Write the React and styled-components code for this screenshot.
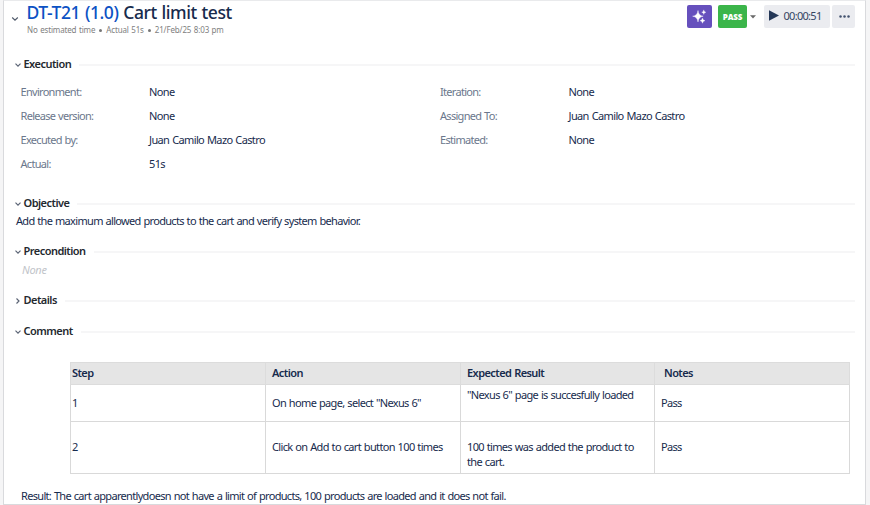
import React from "react";
import styled, { createGlobalStyle } from "styled-components";

const Global = createGlobalStyle`
  *, *::before, *::after { box-sizing: border-box; }
  body {
    margin: 0;
    background: #f5f5f6;
    font-family: "Noto Sans", "Open Sans", sans-serif;
    font-size: 11px;
    line-height: 16px;
    word-spacing: 0.6px;
    color: #172b4d;
    overflow: hidden;
  }
`;

const Panel = styled.main`
  width: 863px;
  height: 505px;
  margin-left: 3px;
  background: #fff;
  border: 1px solid #d9dadd;
  border-top-color: #e9eaec;
  overflow: hidden;
`;

const Header = styled.header`
  display: flex;
  height: 55px;
  padding: 0 10px 0 7px;
`;

const Toggle = styled.span`
  display: flex;
  flex: none;
  width: 16px;
  padding-top: 15px;
`;

const Heading = styled.div`
  flex: 1;
`;

const Title = styled.h1`
  margin: -1px 0 1px -0.5px;
  font-size: 17.5px;
  font-weight: 550;
  line-height: 24px;
  letter-spacing: -0.42px;
  white-space: nowrap;
`;

const IssueKey = styled.span`
  color: #0c52c4;
`;

const Meta = styled.div`
  display: flex;
  gap: 4px;
  font-size: 8px;
  line-height: 10px;
  letter-spacing: -0.15px;
  color: #808080;
  white-space: nowrap;
`;

const Dot = styled.span`
  width: 3px;
  height: 3px;
  margin: 4px 0 0;
  border-radius: 50%;
  background: #777;
`;

const Actions = styled.div`
  display: flex;
  align-items: flex-start;
  padding-top: 4px;
`;

const AiButton = styled.button`
  display: grid;
  place-items: center;
  width: 25px;
  height: 23px;
  margin-right: 6px;
  padding: 0;
  border: 0;
  border-radius: 2px;
  background: #6650bd;
`;

const Status = styled.button`
  width: 29px;
  height: 23px;
  padding: 0;
  border: 0;
  border-radius: 2px;
  background: #3bb54a;
  color: #fff;
  font: 800 8px/22px "Open Sans", sans-serif;
  letter-spacing: -0.2px;
`;

const Caret = styled.span`
  display: flex;
  width: 17px;
  padding: 10px 0 0 3px;
`;

const GreyButton = styled.button`
  display: flex;
  align-items: center;
  justify-content: center;
  gap: 4px;
  width: ${(p) => p.$width};
  height: 23px;
  margin-right: 2px;
  padding: 0 3px 2px 0;
  border: 0;
  border-radius: 2px;
  background: #ebecf0;
  color: #344563;
  font: 11px/21px "Noto Sans", sans-serif;
  letter-spacing: -0.7px;
  &:last-child { margin-right: 0; padding: 0 0 1px 1px; }
`;

const SectionHead = styled.h2`
  display: flex;
  align-items: center;
  height: 16px;
  margin: 0 10px 0 11px;
  font-size: 11px;
  font-weight: 600;
  letter-spacing: -0.53px;
  color: #24292f;

  svg { flex: none; margin: 2px 2.5px 0 0; }
  &::after {
    content: "";
    flex: 1;
    height: 2px;
    margin: 2px 0 0 8px;
    background: #f6f6f7;
  }
`;

const Fields = styled.dl`
  display: grid;
  grid-template-columns: 128.5px 291px 128.5px 1fr;
  grid-auto-rows: 24px;
  align-items: center;
  margin: 8px 0 19px 16.5px;
`;

const Label = styled.dt`
  color: #6b778c;
  letter-spacing: -0.7px;
`;

const Value = styled.dd`
  margin: 0;
  letter-spacing: -0.62px;
`;

const Paragraph = styled.p`
  margin: ${(p) => p.$margin};
  letter-spacing: -0.68px;
  white-space: nowrap;
`;

const Empty = styled.p`
  margin: 3px 0 14px 18px;
  font-style: italic;
  color: #c1c4c9;
  letter-spacing: -0.3px;
`;

const Gap = styled.div`
  height: 15px;
`;

const Table = styled.table`
  width: 780px;
  margin: 23px 0 14px 66px;
  border-collapse: collapse;
  table-layout: fixed;
`;

const Row = styled.tr`
  height: ${(p) => p.$height};
`;

const Th = styled.th`
  padding: 0 0 2px ${(p) => p.$indent || "6px"};
  border: 1px solid #dcdcdc;
  background: #e5e5e5;
  font-weight: 600;
  text-align: left;
  letter-spacing: -0.58px;
`;

const Td = styled.td`
  padding: ${(p) => p.$pad || "0 0 2px 6px"};
  border: 1px solid #d9d9d9;
  vertical-align: ${(p) => p.$align || "middle"};
  line-height: 15px;
  letter-spacing: -0.66px;
  white-space: nowrap;
`;

function Chevron({ right }) {
  return (
    <svg width="6" height="6" viewBox="0 0 6 6" fill="none" stroke="#596273" strokeWidth="1.15">
      <path d={right ? "M1.5 .5 4 3 1.5 5.5" : "M.5 1.7 3 4.2 5.5 1.7"} />
    </svg>
  );
}

function Section({ title, right }) {
  return (
    <SectionHead>
      <Chevron right={right} />
      {title}
    </SectionHead>
  );
}

const fields = [
  ["Environment:", "None"], ["Iteration:", "None"],
  ["Release version:", "None"], ["Assigned To:", "Juan Camilo Mazo Castro"],
  ["Executed by:", "Juan Camilo Mazo Castro"], ["Estimated:", "None"],
  ["Actual:", "51s"],
];

export default function App() {
  return (
    <>
      <Global />
      <Panel>
        <Header>
          <Toggle>
            <svg width="8" height="6" viewBox="0 0 8 6" fill="none" stroke="#505a6b" strokeWidth="1.15">
              <path d="M1.2 1.5 4 4.2 6.8 1.5" />
            </svg>
          </Toggle>
          <Heading>
            <Title><IssueKey>DT-T21 (1.0)</IssueKey> Cart limit test</Title>
            <Meta>
              <span>No estimated time</span><Dot /><span>Actual 51s</span><Dot /><span>21/Feb/25 8:03 pm</span>
            </Meta>
          </Heading>
          <Actions>
            <AiButton aria-label="AI assistant">
              <svg width="15" height="15" viewBox="0 0 15 15" fill="#fff">
                <path d="M6 1.5Q6.5 6.7 11.2 7.2 6.5 7.8 6 13 5.5 7.8 .6 7.2 5.5 6.7 6 1.5Z" stroke="#fff" strokeWidth=".4" />
                <path d="M11.8 .8Q12 3 14 3.2 12 3.4 11.8 5.6 11.6 3.4 9.6 3.2 11.6 3 11.8 .8Z" stroke="#fff" strokeWidth=".2" />
                <path d="M10.5 9.1Q10.8 11.4 13 11.7 10.8 12 10.5 14.3 10.2 12 8 11.7 10.2 11.4 10.5 9.1Z" stroke="#fff" strokeWidth=".3" />
              </svg>
            </AiButton>
            <Status>PASS</Status>
            <Caret>
              <svg width="6" height="4" viewBox="0 0 6 4"><path d="M0 .2h6L3 3.5Z" fill="#686868" /></svg>
            </Caret>
            <GreyButton $width="66px">
              <svg width="10" height="11" viewBox="0 0 10 11"><path d="M0 .2 10 5.5 0 10.8Z" fill="#253858" /></svg>
              00:00:51
            </GreyButton>
            <GreyButton $width="23px" aria-label="More">
              <svg width="11" height="3" viewBox="0 0 11 3" fill="#42526e">
                <circle cx="1.5" cy="1.5" r="1.25" /><circle cx="5.5" cy="1.5" r="1.25" /><circle cx="9.5" cy="1.5" r="1.25" />
              </svg>
            </GreyButton>
          </Actions>
        </Header>

        <Section title="Execution" />
        <Fields>
          {fields.map(([label, value]) => (
            <React.Fragment key={label}>
              <Label>{label}</Label>
              <Value>{value}</Value>
            </React.Fragment>
          ))}
        </Fields>

        <Section title="Objective" />
        <Paragraph $margin="2px 0 14px 12px">Add the maximum allowed products to the cart and verify system behavior.</Paragraph>
        <Section title="Precondition" />
        <Empty>None</Empty>
        <Section title="Details" right />
        <Gap />
        <Section title="Comment" />

        <Table>
          <colgroup><col width="195" /><col width="195" /><col width="194" /><col width="195" /></colgroup>
          <thead>
            <Row $height="22px">
              <Th $indent="1px">Step</Th><Th>Action</Th><Th>Expected Result</Th><Th $indent="9px">Notes</Th>
            </Row>
          </thead>
          <tbody>
            <Row $height="37px">
              <Td $pad="0 0 2px 1px">1</Td>
              <Td>On home page, select "Nexus 6"</Td>
              <Td $align="top" $pad="2px 0 0 6px">"Nexus 6" page is succesfully loaded</Td>
              <Td>Pass</Td>
            </Row>
            <Row $height="52px">
              <Td $pad="0 0 2px 1px">2</Td>
              <Td>Click on Add to cart button 100 times</Td>
              <Td $pad="13px 0 0 6px">100 times was added the product to<br />the cart.</Td>
              <Td>Pass</Td>
            </Row>
          </tbody>
        </Table>
        <Paragraph $margin="0 0 0 17px">Result: The cart apparentlydoesn not have a limit of products, 100 products are loaded and it does not fail.</Paragraph>
      </Panel>
    </>
  );
}
